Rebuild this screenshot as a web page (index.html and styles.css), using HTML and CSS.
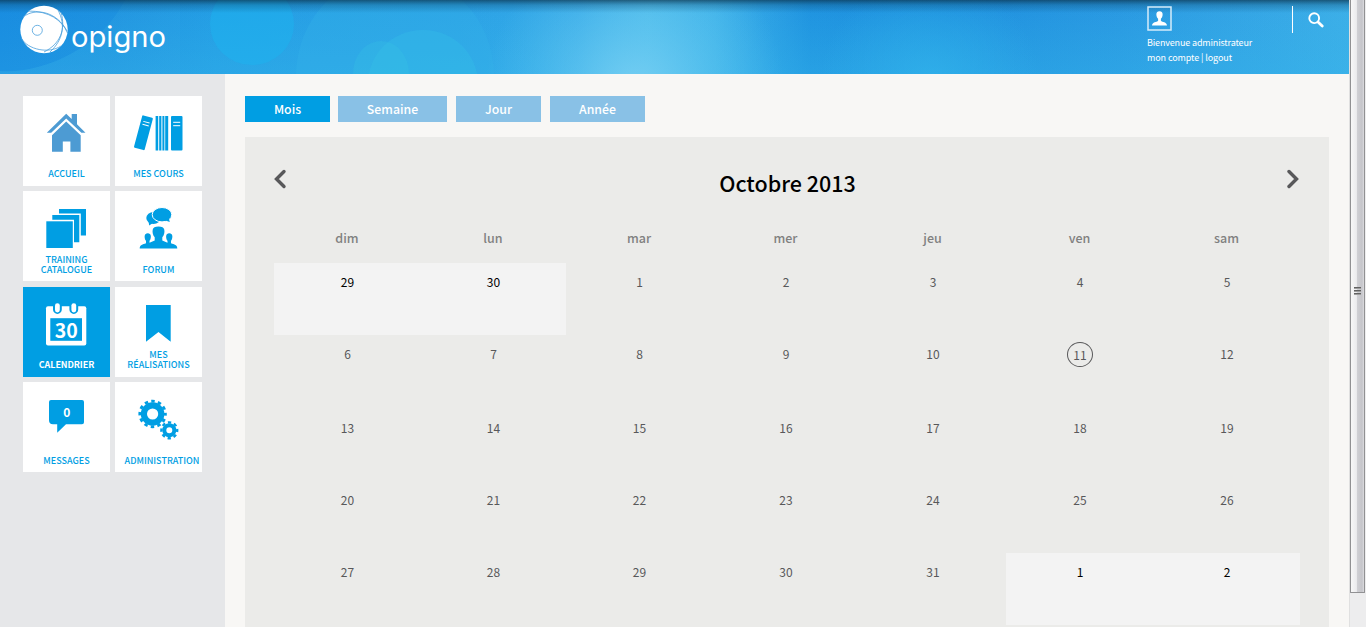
FILE: index.html
```html
<!DOCTYPE html>
<html lang="fr">
<head>
<meta charset="utf-8">
<title>Opigno - Calendrier</title>
<link rel="stylesheet" href="styles.css">
</head>
<body>
<div class="screen">
<div class="page">
  <header class="header">
    <svg class="header-bg" width="1349" height="74" viewBox="0 0 1349 74">
      <defs>
        <linearGradient id="sky" x1="0" x2="1" y1="0" y2="0">
          <stop offset="0" stop-color="#188be0"/><stop offset=".08" stop-color="#1c8fdf"/><stop offset=".16" stop-color="#239be4"/><stop offset=".34" stop-color="#2ba0e5"/><stop offset=".43" stop-color="#36a7e8"/><stop offset=".48" stop-color="#4ab8eb"/><stop offset=".53" stop-color="#3fb0e9"/><stop offset=".6" stop-color="#1e90df"/><stop offset=".7" stop-color="#1c8bdd"/><stop offset=".83" stop-color="#2996e1"/><stop offset="1" stop-color="#3eaee8"/>
        </linearGradient>
        <linearGradient id="rise" x1="0" x2="0" y1="0" y2="1"><stop offset="0" stop-color="#30b5e8" stop-opacity=".05"/><stop offset="1" stop-color="#34b6ea" stop-opacity=".5"/></linearGradient>
        <radialGradient id="glow" gradientUnits="userSpaceOnUse" cx="635" cy="90" r="150"><stop offset="0" stop-color="#80d3f4" stop-opacity=".85"/><stop offset="1" stop-color="#60c8f0" stop-opacity="0"/></radialGradient>
        <radialGradient id="glow-right" gradientUnits="userSpaceOnUse" cx="930" cy="84" r="110"><stop offset="0" stop-color="#33b6ec" stop-opacity=".7"/><stop offset="1" stop-color="#33b6ec" stop-opacity="0"/></radialGradient>
        <linearGradient id="shade" x1="0" x2="0" y1="0" y2="1"><stop offset="0" stop-color="#0a324b" stop-opacity=".7"/><stop offset=".4" stop-color="#0a466b" stop-opacity=".32"/><stop offset="1" stop-color="#0a466b" stop-opacity="0"/></linearGradient>
      </defs>
      <rect width="1349" height="74" fill="url(#sky)"/>
      <rect width="1349" height="74" fill="url(#rise)" opacity=".4"/>
      <path d="M125 0C100 50 40 74 0 71V74H1349V0Z" fill="url(#rise)" opacity=".6"/>
      <path d="M125 0C100 50 40 74 0 71V74H180V0Z" fill="#3fb0ea" opacity=".12"/>
      <ellipse cx="252" cy="24" rx="42" ry="41" fill="#1cb4ef" opacity=".5"/>
      <ellipse cx="395" cy="76" rx="99" ry="103" fill="#33b3e7" opacity=".35"/>
      <ellipse cx="423" cy="84" rx="55" ry="54" fill="#36c4e8" opacity=".28"/>
      <ellipse cx="381" cy="74" rx="28" ry="33" fill="#38c9e5" opacity=".25"/>
      <rect x="480" width="310" height="74" fill="url(#glow)"/>
      <rect x="820" width="220" height="74" fill="url(#glow-right)"/>
      <rect width="1349" height="13" fill="url(#shade)"/>
    </svg>
    <a class="logo">
      <svg width="150" height="56" viewBox="0 0 150 56">
        <circle cx="24" cy="29.500" r="23.700" fill="#fff"/>
        <g fill="none" stroke="#4aa0dc" stroke-width=".8">
          <circle cx="17.300" cy="30.300" r="5"/>
          <path d="M3 17C16 7 37 12 47 31M8 11C29 11 42 20 47.500 33M38 10C46 25 43 40 30 52M41 12C46 30 40 44 24 52M1 38C8 50 29 54 41 46"/>
        </g>
        <text class="wordmark" x="51" y="47.300" textLength="95" lengthAdjust="spacingAndGlyphs">opigno</text>
      </svg>
    </a>
    <div class="account">
      <svg width="25" height="25" viewBox="0 0 25 25">
        <rect x="1" y="1" width="23" height="23" fill="none" stroke="#d5ecfa" stroke-width="1.500"/>
        <path d="M12.500 5.300c-2.300 0-3.400 1.600-3.100 3.600.1 1.500.8 3 1.700 3.900v2.200c-1.400 1-5.800 1-6.100 4.500H20c-.3-3.500-4.700-3.500-6.100-4.500v-2.200c.9-.9 1.600-2.400 1.700-3.900.3-2-.8-3.600-3.100-3.600z" fill="#fff"/>
      </svg>
      <div class="account-text">Bienvenue administrateur</div>
      <div class="account-text account-links">mon compte | logout</div>
    </div>
    <div class="search">
      <svg width="16" height="16" viewBox="0 0 16 16" fill="none" stroke="#fff"><circle cx="6.200" cy="6.200" r="4.900" stroke-width="1.900"/><path d="M10 10l4.200 4" stroke-width="2.800" stroke-linecap="round"/></svg>
    </div>
  </header>
  <div class="body">
    <nav class="sidebar">
      <a class="tile"><svg class="icon" viewBox="0 0 87 68"><g fill="#4d9bd3"><path d="M43.200 17.800l5.500 5.300V18H54v10.200l8.500 8.600h-4.100L43.200 22.500 28.200 36.800h-4.400z"/><path d="M43.200 25.600l14.500 13.600v16.600H47.400V45.600h-7.600v10.200H29V39.200z"/></g></svg><span class="label">ACCUEIL</span></a>
      <a class="tile"><svg class="icon" viewBox="0 0 87 68"><g fill="#009ee3"><g transform="rotate(15 28.500 36.500)"><rect x="23" y="20" width="11" height="33.500" rx="1"/><path d="M25.400 25.800h6.500M25.400 28.800h6.500" stroke="#fff" stroke-width="1"/></g><rect x="40.600" y="20" width="2.600" height="34.500"/><rect x="44.200" y="20" width="2.200" height="34.500"/><rect x="47.400" y="20" width="2" height="34.500"/><rect x="50.200" y="20" width="3" height="34.500"/><rect x="56" y="20" width="11.500" height="34.500" rx="1"/><path d="M58.200 26.300h7M58.200 29.700h7" stroke="#fff" stroke-width="1"/></g></svg><span class="label">MES COURS</span></a>
      <a class="tile"><svg class="icon" viewBox="0 0 87 68"><g fill="#009ee3"><path d="M36 18h27v26.500h-5.200V22.500H36z"/><path d="M29.300 24h27v27.200H51V28.700H29.300z"/><path d="M23.300 30.300h26.500V57H23.300z"/></g></svg><span class="label">TRAINING<br>CATALOGUE</span></a>
      <a class="tile"><svg class="icon" viewBox="0 0 87 68"><g fill="#009ee3"><ellipse cx="38.500" cy="27" rx="7.200" ry="6"/><path d="M33.500 30l.7 4.500 6-4z"/><ellipse cx="47" cy="23.700" rx="9.800" ry="7.200" stroke="#fff" stroke-width="1"/><path d="M49 29l5.800 2-1.200-4.500z"/><path d="M24.700 57.500c0-3.500 3-4 6.300-5.200v-2.600c-1.300-1-2-5.200-.6-6.500 1.200-1.200 3.500-1.200 4.700 0 1.400 1.300.7 5.500-.6 6.500v2.100l5.200-2.300v-3.300c-1.800-1.600-2.500-5-2-7.500.5-2.300 2.300-3.200 5.800-3.200s5.300.9 5.800 3.200c.5 2.500-.2 5.900-2 7.500v3.300l5.200 2.300v-2.100c-1.300-1-2-5.200-.6-6.500 1.200-1.200 3.500-1.200 4.700 0 1.400 1.300.7 5.500-.6 6.500v2.600c3.300 1.200 6.300 1.700 6.300 5.200z"/></g></svg><span class="label">FORUM</span></a>
      <a class="tile tile-active"><svg class="icon" viewBox="0 0 87 68"><rect x="23" y="19.300" width="40.300" height="39.200" rx="2" fill="#fff"/><path d="M27.300 31.200H59v22.600H27.300z" fill="#009ee3"/><path d="M30 15v7.500a4.400 4.400 0 0 0 8.800 0V15zM46.400 15v7.500a4.400 4.400 0 0 0 8.800 0V15z" fill="#009ee3"/><rect x="32" y="16.200" width="4.800" height="9.300" rx="2.400" fill="#fff"/><rect x="48.400" y="16.200" width="4.800" height="9.300" rx="2.400" fill="#fff"/><text class="date-glyph" x="43.300" y="51" text-anchor="middle" textLength="23" lengthAdjust="spacingAndGlyphs">30</text></svg><span class="label">CALENDRIER</span></a>
      <a class="tile"><svg class="icon" viewBox="0 0 87 68"><path d="M31 18h24.700v36.800L43.500 45 31 54.800z" fill="#009ee3"/></svg><span class="label">MES<br>RÉALISATIONS</span></a>
      <a class="tile"><svg class="icon" viewBox="0 0 87 68"><path d="M28 18h31q2 0 2 2v20.200q0 2-2 2H43l-8.800 8.600v-8.600H30q-4 0-4-4V20q0-2 2-2z" fill="#009ee3"/><text class="count-glyph" x="43.700" y="35" text-anchor="middle">0</text></svg><span class="label">MESSAGES</span></a>
      <a class="tile"><svg class="icon" viewBox="0 0 87 68"><g fill="none" stroke="#009ee3"><circle cx="37.600" cy="32" r="8.700" stroke-width="6.200"/><circle cx="37.600" cy="32" r="12.800" stroke-width="2.800" stroke-dasharray="3.500 3.202" stroke-dashoffset="1.750"/><circle cx="54.300" cy="48.300" r="5" stroke-width="4"/><circle cx="54.300" cy="48.300" r="7.900" stroke-width="2.400" stroke-dasharray="3.300 2.905" stroke-dashoffset="1.650"/></g></svg><span class="label label-wide">ADMINISTRATION</span></a>
    </nav>
    <main class="main">
      <div class="tabs">
        <a class="tab tab-month">Mois</a><a class="tab tab-week">Semaine</a><a class="tab tab-day">Jour</a><a class="tab tab-year">Année</a>
      </div>
      <section class="calendar">
        <div class="pager">
          <svg class="arrow" width="13" height="20" viewBox="0 0 13 20"><path d="M10 2.500L2.500 10l7.500 7.500"/></svg>
          <h1 class="title">Octobre 2013</h1>
          <svg class="arrow" width="13" height="20" viewBox="0 0 13 20"><path d="M2 2.500L9.500 10 2 17.500"/></svg>
        </div>
        <div class="week days"><span>dim</span><span>lun</span><span>mar</span><span>mer</span><span>jeu</span><span>ven</span><span>sam</span></div>
        <div class="week"><span class="other">29</span><span class="other">30</span><span>1</span><span>2</span><span>3</span><span>4</span><span>5</span></div>
        <div class="week week-tall"><span>6</span><span>7</span><span>8</span><span>9</span><span>10</span><span><b class="today">11</b></span><span>12</span></div>
        <div class="week"><span>13</span><span>14</span><span>15</span><span>16</span><span>17</span><span>18</span><span>19</span></div>
        <div class="week"><span>20</span><span>21</span><span>22</span><span>23</span><span>24</span><span>25</span><span>26</span></div>
        <div class="week"><span>27</span><span>28</span><span>29</span><span>30</span><span>31</span><span class="other">1</span><span class="other">2</span></div>
      </section>
    </main>
  </div>
</div>
<div class="scrollbar"><div class="thumb"><div class="grip"><i></i><i></i><i></i></div></div></div>
</div>
</body>
</html>
```

FILE: styles.css
```css
* { box-sizing: border-box; }
body { margin: 0; overflow: hidden; background: #f8f7f5; font-family: "Noto Sans CJK SC", "Noto Sans CJK JP", "Noto Sans", sans-serif; }
.screen { display: flex; width: 1366px; height: 627px; overflow: hidden; }
.page { width: 1349px; display: flex; flex-direction: column; }
.header { position: relative; flex: none; height: 74px; display: flex; color: #fff; }
.header-bg { position: absolute; inset: 0; }
.logo { position: relative; margin-left: 20px; width: 1127px; }
.logo svg { display: block; }
.wordmark { font-family: Inter, sans-serif; font-size: 28px; font-weight: 400; fill: #fff; }
.account { position: relative; width: 145px; padding-top: 6px; }
.account svg { display: block; }
.account-text { font-size: 9px; line-height: 15px; margin-top: 4px; white-space: nowrap; letter-spacing: -.15px; }
.account-links { margin-top: 0; letter-spacing: -.1px; }
.search { position: relative; height: 27px; margin-top: 6px; padding: 6px 0 0 15px; border-left: 1px solid #fff; }
.search svg { display: block; }
.body { flex: 1; display: flex; min-height: 0; }
.sidebar { width: 225px; background: #e6e7e9; padding: 22px 23px 0; display: grid; grid-template-columns: 87px 87px; grid-auto-rows: 90px; column-gap: 5px; row-gap: 5.4px; align-content: start; }
.tile { background: #fff; color: #009ee3; display: flex; flex-direction: column; position: relative; }
.tile-active { background: #009ee3; color: #fff; }
.tile-active .label { font-weight: 700; letter-spacing: -.1px; }
.icon { width: 87px; height: 68px; flex: none; display: block; }
.label { position: absolute; left: 0; right: 0; bottom: 6.55px; text-align: center; font-size: 9px; line-height: 10px; font-weight: 500; }
.label-wide { left: 7px; }
.date-glyph { font-size: 20px; font-weight: 700; fill: #fff; }
.count-glyph { font-size: 12px; font-weight: 700; fill: #fff; }
.main { flex: 1; padding: 22px 20px 0; }
.tabs { display: flex; height: 26px; }
.tab { height: 26px; line-height: 27px; text-align: center; background: #89c1e6; color: #fff; font-size: 12.3px; font-weight: 500; }
.tab-month { width: 85px; background: #009ee3; }
.tab-week { width: 109px; margin-left: 8px; }
.tab-day { width: 85px; margin-left: 9px; }
.tab-year { width: 95px; margin-left: 9px; }
.calendar { margin-top: 15px; height: 500px; background: #ebebe9; padding: 32px 29px 0; }
.pager { display: flex; justify-content: space-between; height: 58px; }
.arrow { fill: none; stroke: #58585a; stroke-width: 3.4; stroke-linecap: round; }
.title { margin: -1px 0 0 1px; font-size: 21.500px; line-height: 30px; font-weight: 500; color: #000; }
.week { display: grid; grid-template-columns: 146px 146px 146px 147px 147px 147px 147px; height: 72px; font-size: 12px; line-height: 20px; color: #58585a; text-align: center; }
.week > span { padding: 9px 0 0 1px; }
.week-tall { height: 74px; }
.days { height: 36px; font-size: 12.500px; font-weight: 500; color: #808080; }
.days > span { padding: 1px 0 0; }
.week > .other { background: #f3f3f3; color: #000; }
.today { display: block; width: 26px; height: 25px; margin: -2px auto 0; border: 1px solid #58585a; border-radius: 50%; line-height: 24px; font-weight: 400; }
.scrollbar { width: 17px; background: #ededee; border-left: 1px solid #e0e0e0; }
.thumb { width: 15px; height: 593px; padding: 287px 0 0 3px; border: 1px solid #919193; border-top: 0; border-radius: 0 0 1px 1px; background: linear-gradient(90deg, #f8f8f8, #ececee 42%, #d0d0d4 48%, #c5c5ca 85%, #dddde0); }
.grip { display: grid; gap: 1px; width: 7px; }
.grip i { height: 2px; background: linear-gradient(#444, #bbb); }
```
